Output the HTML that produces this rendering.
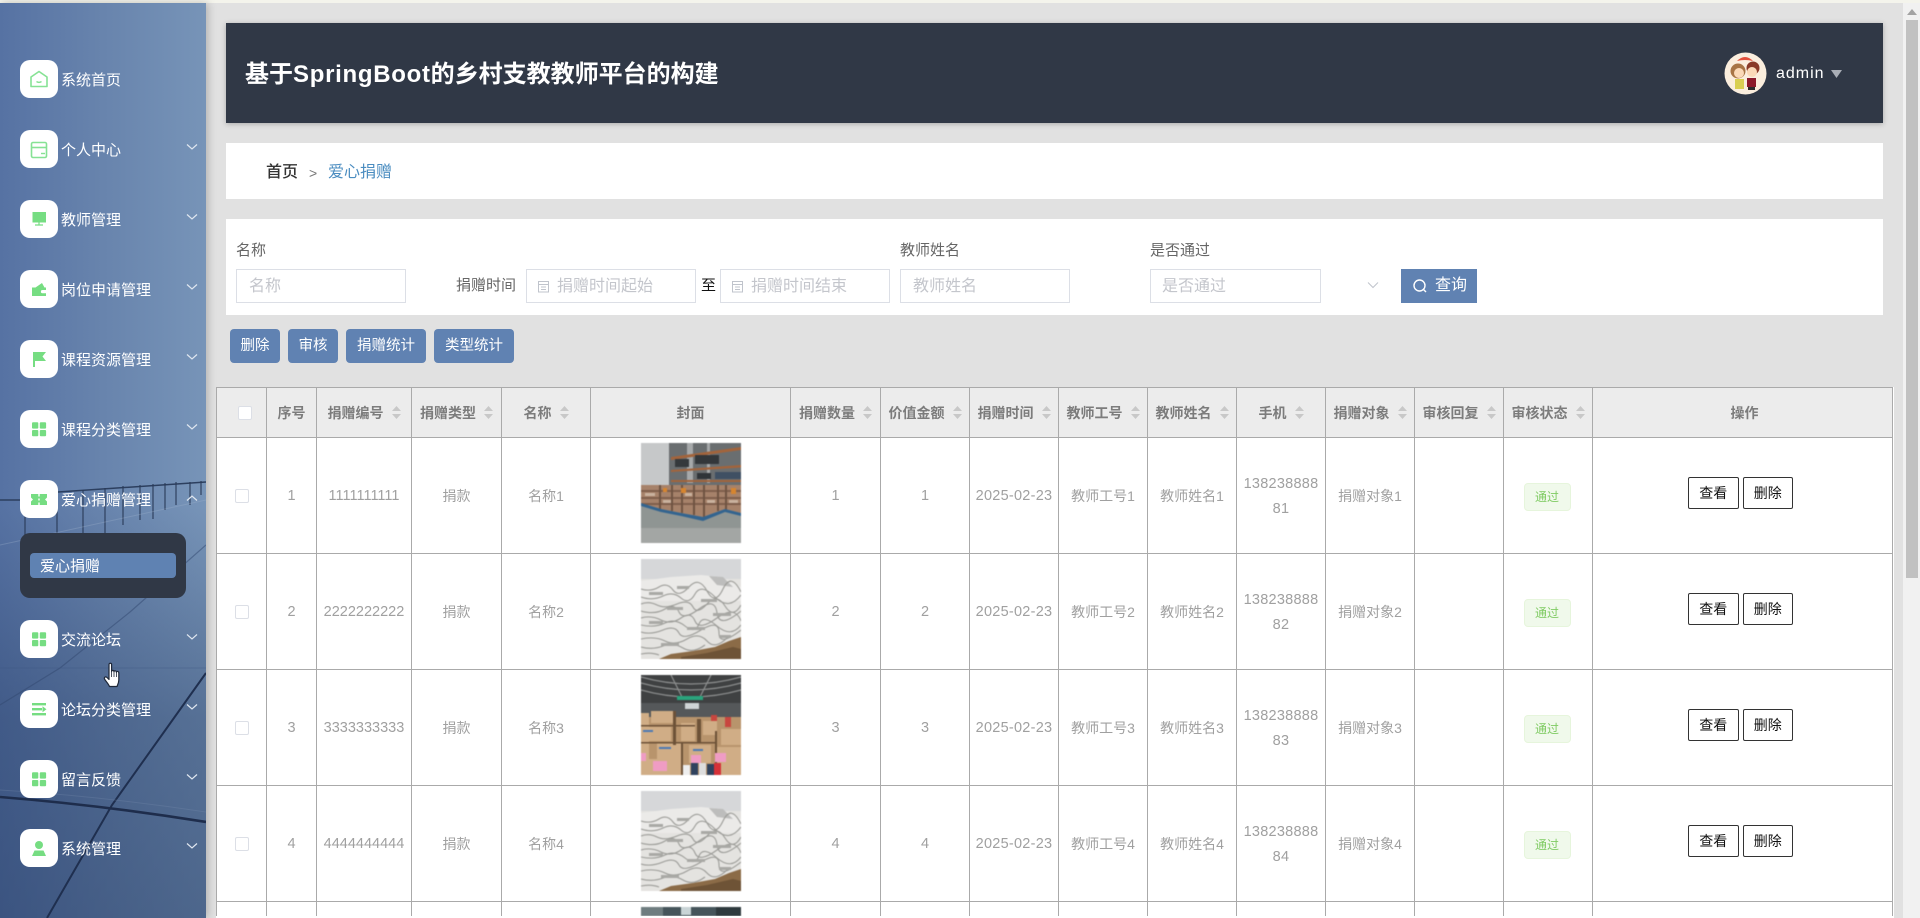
<!DOCTYPE html>
<html lang="zh-CN">
<head>
<meta charset="utf-8">
<title>爱心捐赠</title>
<style>
*{box-sizing:border-box}
html,body{margin:0;padding:0;width:1920px;height:918px;overflow:hidden;background:#e1e1e1;font-family:"Liberation Sans","Noto Sans CJK SC",sans-serif}
.abs,.abs-t{position:absolute}
#top{left:0;top:0;width:1920px;height:3px;background:#f4f4ec}
#side{left:0;top:3px;width:206px;height:915px;box-shadow:2px 0 8px rgba(0,0,0,.22);overflow:hidden}
.ib{position:absolute;left:20px;width:38px;height:38px;border-radius:10px;background:#fff}
.ib svg{display:block;width:38px;height:38px}
.mt{position:absolute;left:61px;color:#fff;font-size:15px;line-height:20px;white-space:nowrap;margin-top:2px}
.chev{position:absolute;left:186px;width:12px;height:8px}
#sub{left:20px;top:533px;width:166px;height:65px;border-radius:10px;background:#303846}
#subi{left:30px;top:553px;width:146px;height:25px;border-radius:4px;background:#5f82b2;color:#fff;font-size:15px;line-height:27px;padding-left:10px}
#head{left:226px;top:23px;width:1657px;height:100px;background:#303846;box-shadow:0 1px 5px rgba(0,0,0,.25)}
#title{left:245px;top:57px;color:#fff;font-size:24px;line-height:36px;font-weight:bold;white-space:nowrap}
#title span{letter-spacing:.7px}
#admin{left:1776px;top:62px;color:#fff;font-size:16px;line-height:24px;letter-spacing:1px}
#crumb{left:226px;top:143px;width:1657px;height:56px;background:#fff}
.cr{position:absolute;white-space:nowrap;line-height:24px;top:161px;font-size:16px}
#search{left:226px;top:219px;width:1657px;height:96px;background:#fff}
.lab{position:absolute;top:240px;font-size:15px;line-height:22px;color:#666;white-space:nowrap}
.inp{position:absolute;top:269px;width:170px;height:34px;border:1px solid #dcdfe6;background:#fff;font-size:16px;line-height:34px;color:#c4c6cc;white-space:nowrap}
.btn{position:absolute;top:329px;height:34px;background:#6082b2;border-radius:4px;color:#fff;font-size:14.5px;line-height:34px;text-align:center}
#q{left:1401px;top:269px;width:76px;height:34px;background:#6082b2;color:#fff;font-size:16px;line-height:34px;padding-left:34px}
#tw{left:216px;top:387px;width:1678px;height:531px;overflow:hidden;background:#fff}
table{border-collapse:collapse;table-layout:fixed;width:1677px;background:#fff}
th,td{border:1px solid #aaa;padding:0;text-align:center;vertical-align:middle;overflow:hidden}
th{height:50px;background:#ececec;color:#7c7c7c;font-size:14px;font-weight:bold;white-space:nowrap}
td{height:116px;color:#a0a0a0;font-size:14px;line-height:25px;padding-top:2px}
td.n{font-size:14.5px}
td.w{letter-spacing:.25px}
td.c{padding-top:0}
td.im{vertical-align:top;padding-top:5px}
td svg{display:block;margin:0 auto;width:100px;height:100px;filter:blur(.45px)}
th span.s{display:inline-flex;align-items:center;gap:8px}
th svg{display:block;width:9px;height:13px}
.cb{display:block;width:14px;height:14px;border:1px solid #dcdfe6;border-radius:2px;background:#fff;margin-left:18px}
th .cb{margin-left:21px}
.tag{display:inline-block;width:47px;height:28px;line-height:26px;background:#f0f9eb;border:1px solid #e6f5dc;border-radius:4px;color:#7fcb62;font-size:12px;position:relative;left:-1px}
td.op{padding:0 4px 6px 0}
.op b{display:inline-block;width:50.5px;height:32px;line-height:30px;border:1px solid #333;border-radius:2px;background:#fff;color:#111;font-size:14px;font-weight:normal;margin:0 2px}
th.opt{padding-left:4px}
tr.last td{height:14px;border-bottom:0;line-height:0}
tr.last td.im{padding-top:5px}
#sb{left:1903px;top:3px;width:17px;height:915px;background:#f1f1f1}
#thumb{left:1906px;top:20px;width:12px;height:558px;background:#c1c1c1}
</style>
</head>
<body>
<svg width="0" height="0" style="position:absolute">
<defs>
<symbol id="sort" viewBox="0 0 9 13"><path d="M4.5 0L9 5H0Z M0 8H9L4.5 13Z" fill="#c8c8c8"/></symbol>
<symbol id="w1" viewBox="0 0 100 100">
<rect width="100" height="100" fill="#8f9593"/>
<rect width="100" height="44" fill="#b5b7b8"/>
<rect x="0" y="0" width="30" height="44" fill="#c6c8c9"/>
<rect x="28" y="0" width="72" height="44" fill="#6a6e70"/>
<rect x="46" y="0" width="6" height="40" fill="#a6a9aa"/>
<rect x="66" y="0" width="3" height="40" fill="#a6a9aa"/>
<path d="M30 14 100 4V7L30 17Z M30 27 100 22V24.5L30 29Z M30 37H100V39H30Z" fill="#a2643c"/>
<rect x="34" y="16" width="14" height="8" fill="#35393c"/><rect x="54" y="12" width="24" height="9" fill="#33373a"/>
<rect x="56" y="30" width="14" height="6" fill="#2f3438"/><rect x="74" y="29" width="26" height="7" fill="#3f5063"/>
<path d="M0 42H100V70L84 66 62 74 40 70 20 66 0 60Z" fill="#a6826a"/>
<path d="M0 47H100V49H0Z M0 54H100V56H0Z M0 60H100V62H0Z" fill="#7f5f4c"/>
<path d="M18 42h2v26h-2z M30 42h2v26h-2z M40 42h2v28h-2z M52 42h2v30h-2z M62 42h2v32h-2z M76 42h2v26h-2z M84 42h2v26h-2z" fill="#6f5342"/>
<g fill="#c9b29e"><rect x="4" y="50" width="10" height="3"/><rect x="22" y="57" width="8" height="3"/><rect x="44" y="50" width="7" height="3"/><rect x="66" y="57" width="8" height="3"/><rect x="88" y="57" width="9" height="3"/></g>
<rect x="40" y="45" width="5" height="5" fill="#d6852f"/><rect x="90" y="45" width="5" height="6" fill="#d6852f"/><rect x="22" y="45" width="4" height="4" fill="#d6852f"/>
<path d="M0 60 20 66 40 70 62 74 84 66 100 70V73L84 69 62 78 40 73 20 69 0 63Z" fill="#33648f"/>
<rect y="85" width="100" height="15" fill="#a3a6a4"/>
</symbol>
<symbol id="w2" viewBox="0 0 100 100">
<rect width="100" height="100" fill="#e4e3e0"/>
<rect width="100" height="20" fill="#d6d7d9"/>
<path d="M0 22 30 18 60 16 80 18 100 28V42H0Z" fill="#ebeae8"/>
<path d="M68 17 82 18 92 28 76 26Z" fill="#bdbdbc"/>
<g fill="none" stroke="#9c9c98" stroke-width="1.1">
<path d="M0 30q10 3 18-2t14 3 16-3 18 4 16-2 18 3"/><path d="M0 38q12 4 22-1t18 2 14-4 20 3 26-2"/>
<path d="M0 45q8-3 16 1t20-1 16 3 14-3 18 2 16-1"/><path d="M0 52q14 4 24-2t14 3 20-3 18 4 24-2"/>
<path d="M0 59q10-3 20 2t20-2 14 3 22-3 24 3"/><path d="M0 66q14 3 24-2t20 3 14-2 18 2 24-1"/>
<path d="M0 73q10 3 22-2t16 3 22-3 18 3 22-3"/><path d="M0 80q14-3 24 2t22-2 20 2 20-3"/>
<path d="M0 88q12 3 22-1t20 2 22-3"/><path d="M0 95q10-2 18 1"/>
</g>
<g fill="#a9a9a5"><rect x="8" y="33" width="14" height="3"/><rect x="36" y="27" width="12" height="3"/><rect x="60" y="40" width="16" height="3"/><rect x="26" y="48" width="16" height="3"/><rect x="72" y="54" width="18" height="3"/><rect x="8" y="62" width="14" height="3"/><rect x="46" y="68" width="18" height="3"/><rect x="78" y="76" width="12" height="3"/><rect x="20" y="84" width="18" height="3"/></g>
<path d="M100 78V100H18L30 95 52 92 74 88 88 82Z" fill="#8b6b47"/>
<path d="M40 98 66 94 92 88 100 90V100H40Z" fill="#6e5336"/>
</symbol>
<symbol id="w3" viewBox="0 0 100 100">
<rect width="100" height="100" fill="#b8946c"/>
<rect width="100" height="30" fill="#3f4142"/>
<g fill="none" stroke="#8c8e8e" stroke-width="1.2"><path d="M0 8q50 14 100 0"/><path d="M0 15q50 14 100 0"/><path d="M0 2q50 14 100 0"/><path d="M30 0 42 24M70 0 58 24"/></g>
<rect x="36" y="21" width="26" height="4" fill="#2aa37c"/>
<rect x="0" y="28" width="100" height="14" fill="#55585a"/>
<rect x="44" y="28" width="14" height="6" fill="#cfd4d6"/>
<rect x="70" y="40" width="6" height="10" fill="#c8463f"/><rect x="84" y="42" width="6" height="10" fill="#c8463f"/>
<g fill="#d0ad86"><rect x="0" y="38" width="8" height="62"/><rect x="10" y="36" width="22" height="12"/><rect x="4" y="52" width="26" height="14"/><rect x="40" y="48" width="14" height="18"/><rect x="62" y="46" width="14" height="14"/><rect x="80" y="54" width="20" height="16"/><rect x="16" y="68" width="24" height="16"/><rect x="48" y="70" width="22" height="18"/><rect x="76" y="72" width="24" height="28"/><rect x="6" y="84" width="34" height="16"/></g>
<g fill="#6d5238"><rect x="32" y="36" width="3" height="34"/><rect x="56" y="44" width="4" height="24"/><rect x="0" y="50" width="54" height="1.5"/><rect x="0" y="67" width="76" height="1.5"/><rect x="40" y="68" width="2" height="32"/><rect x="74" y="56" width="2" height="44"/></g>
<g fill="#4c7ab4"><rect x="2" y="55" width="10" height="2"/><rect x="18" y="72" width="12" height="2"/><rect x="52" y="74" width="10" height="2"/></g>
<rect x="12" y="86" width="14" height="10" fill="#ef9cc4"/><rect x="50" y="80" width="10" height="8" fill="#ef9cc4"/><rect x="74" y="78" width="11" height="9" fill="#ef9cc4"/><rect x="0" y="78" width="5" height="8" fill="#ef9cc4"/>
<rect x="42" y="90" width="7" height="10" fill="#eee"/><rect x="50" y="88" width="7" height="12" fill="#30425e"/><rect x="58" y="88" width="7" height="12" fill="#ddd"/><rect x="66" y="89" width="7" height="11" fill="#30425e"/><rect x="73" y="88" width="7" height="12" fill="#d63138"/>
</symbol>
</defs>
</svg>

<div class="abs" id="top"></div>

<div class="abs" id="side">
<svg width="206" height="915" viewBox="0 3 206 915" style="display:block">
<defs>
<linearGradient id="sg" x1="0" x2="1" y1="0" y2="0"><stop offset="0" stop-color="#5672a3"/><stop offset=".5" stop-color="#6884ad"/><stop offset="1" stop-color="#7794b8"/></linearGradient>
<linearGradient id="dk" x1="0" x2="0" y1="0" y2="1"><stop offset="0" stop-color="#1a2f56" stop-opacity="0"/><stop offset=".55" stop-color="#1a2f56" stop-opacity="0"/><stop offset=".78" stop-color="#1a2f56" stop-opacity=".35"/><stop offset="1" stop-color="#1a2f56" stop-opacity=".45"/></linearGradient>
</defs>
<rect y="3" width="206" height="915" fill="url(#sg)"/>
<rect y="3" width="206" height="915" fill="url(#dk)"/>
<path d="M0 500 H20 M58 492 L206 482" stroke="#2c3f5f" stroke-width="1.5" fill="none"/>
<g stroke="#2a3b58" stroke-width="1.3" opacity=".85">
<path d="M25 498V535M57 492V535M83 490V533M105 488V533M123 486V525M140 485V520M153 484V519M165 483V510M176 482V505M190 482V505M201 481V495"/>
</g>
<path d="M0 545 L206 500" stroke="#a3b6cf" stroke-width="1" opacity=".3"/>
<path d="M0 705 L60 668 130 612 206 545" stroke="#32486f" stroke-width="1.2" opacity=".5" fill="none"/>
<path d="M0 668H206" stroke="#3b5480" stroke-width="1" opacity=".35"/>
<path d="M206 673 L112 805 L47 918" stroke="#1f2f4f" stroke-width="2" fill="none"/>
<path d="M0 797 Q100 805 206 822" stroke="#1e2d4c" stroke-width="2.6" fill="none"/>
<path d="M0 790 Q100 796 206 812" stroke="#7e95b4" stroke-width="1" fill="none" opacity=".25"/>
</svg>
</div>

<div class="ib" style="top:60px"><svg viewBox="0 0 38 38"><path d="M19 11.5L27 17V26.5H11V17Z" fill="none" stroke="#86e294" stroke-width="1.6" stroke-linejoin="round"/><path d="M16.5 21.5q2.5 1.8 5 0" fill="none" stroke="#86e294" stroke-width="1.4"/></svg></div>
<div class="mt" style="top:69px">系统首页</div>

<div class="ib" style="top:130px"><svg viewBox="0 0 38 38"><rect x="11.5" y="12.5" width="15" height="15" rx="1.5" fill="none" stroke="#86e294" stroke-width="1.6"/><path d="M11.5 17.5H26.5" stroke="#86e294" stroke-width="1.6"/><path d="M21 23.5H25" stroke="#86e294" stroke-width="1.4"/></svg></div>
<div class="mt" style="top:139px">个人中心</div>
<svg class="chev" style="top:143px" viewBox="0 0 12 8"><path d="M1 1.5L6 6L11 1.5" fill="none" stroke="#e0e7f0" stroke-width="1.2"/></svg>

<div class="ib" style="top:200px"><svg viewBox="0 0 38 38"><rect x="12.5" y="12" width="13.5" height="10.5" fill="#76dd82"/><path d="M19 22.5V24.5M15 25H23" stroke="#76dd82" stroke-width="1.2"/></svg></div>
<div class="mt" style="top:209px">教师管理</div>
<svg class="chev" style="top:213px" viewBox="0 0 12 8"><path d="M1 1.5L6 6L11 1.5" fill="none" stroke="#e0e7f0" stroke-width="1.2"/></svg>

<div class="ib" style="top:270px"><svg viewBox="0 0 38 38"><path d="M12 17.5H15.5L22 13L24.5 17.5H26V20H22.5A1.6 1.6 0 0 0 22.5 23.2H26V26H12Z" fill="#76dd82"/></svg></div>
<div class="mt" style="top:279px">岗位申请管理</div>
<svg class="chev" style="top:283px" viewBox="0 0 12 8"><path d="M1 1.5L6 6L11 1.5" fill="none" stroke="#e0e7f0" stroke-width="1.2"/></svg>

<div class="ib" style="top:340px"><svg viewBox="0 0 38 38"><path d="M13 12H15V27H13Z" fill="#76dd82"/><path d="M15 12H26L22.5 16.5L26 21H15Z" fill="#76dd82"/></svg></div>
<div class="mt" style="top:349px">课程资源管理</div>
<svg class="chev" style="top:353px" viewBox="0 0 12 8"><path d="M1 1.5L6 6L11 1.5" fill="none" stroke="#e0e7f0" stroke-width="1.2"/></svg>

<div class="ib" style="top:410px"><svg viewBox="0 0 38 38"><g fill="#76dd82"><rect x="12" y="12.3" width="6.3" height="6.3" rx="1"/><rect x="19.8" y="12.3" width="6.3" height="6.3" rx="1"/><rect x="12" y="20" width="6.3" height="6.3" rx="1"/><rect x="19.8" y="20" width="6.3" height="6.3" rx="1"/></g></svg></div>
<div class="mt" style="top:419px">课程分类管理</div>
<svg class="chev" style="top:423px" viewBox="0 0 12 8"><path d="M1 1.5L6 6L11 1.5" fill="none" stroke="#e0e7f0" stroke-width="1.2"/></svg>

<div class="ib" style="top:480px"><svg viewBox="0 0 38 38"><path d="M11 14H27V17.5L25 19.5L27 21.5V25H11V21.5L13 19.5L11 17.5Z" fill="#76dd82"/><path d="M19 14V16.5M19 18.5V20.5M19 22.5V25" stroke="#fff" stroke-width="1.4"/></svg></div>
<div class="mt" style="top:489px">爱心捐赠管理</div>
<svg class="chev" style="top:494px" viewBox="0 0 12 8"><path d="M1 6.5L6 2L11 6.5" fill="none" stroke="#e0e7f0" stroke-width="1.2"/></svg>

<div class="abs" id="sub"></div>
<div class="abs" id="subi">爱心捐赠</div>

<div class="ib" style="top:620px"><svg viewBox="0 0 38 38"><g fill="#76dd82"><rect x="12" y="12.3" width="6.3" height="6.3" rx="1"/><rect x="19.8" y="12.3" width="6.3" height="6.3" rx="1"/><rect x="12" y="20" width="6.3" height="6.3" rx="1"/><rect x="19.8" y="20" width="6.3" height="6.3" rx="1"/></g></svg></div>
<div class="mt" style="top:629px">交流论坛</div>
<svg class="chev" style="top:633px" viewBox="0 0 12 8"><path d="M1 1.5L6 6L11 1.5" fill="none" stroke="#e0e7f0" stroke-width="1.2"/></svg>

<div class="ib" style="top:690px"><svg viewBox="0 0 38 38"><g fill="#76dd82"><rect x="12" y="13" width="14" height="2.4"/><rect x="12" y="18" width="10" height="2.4"/><path d="M22.5 16.2L26.5 19.2L22.5 22.2Z"/><rect x="12" y="23" width="14" height="2.4"/></g></svg></div>
<div class="mt" style="top:699px">论坛分类管理</div>
<svg class="chev" style="top:703px" viewBox="0 0 12 8"><path d="M1 1.5L6 6L11 1.5" fill="none" stroke="#e0e7f0" stroke-width="1.2"/></svg>

<div class="ib" style="top:760px"><svg viewBox="0 0 38 38"><g fill="#76dd82"><rect x="12" y="12.3" width="6.3" height="6.3" rx="1"/><rect x="19.8" y="12.3" width="6.3" height="6.3" rx="1"/><rect x="12" y="20" width="6.3" height="6.3" rx="1"/><rect x="19.8" y="20" width="6.3" height="6.3" rx="1"/></g></svg></div>
<div class="mt" style="top:769px">留言反馈</div>
<svg class="chev" style="top:773px" viewBox="0 0 12 8"><path d="M1 1.5L6 6L11 1.5" fill="none" stroke="#e0e7f0" stroke-width="1.2"/></svg>

<div class="ib" style="top:829px"><svg viewBox="0 0 38 38"><circle cx="19" cy="16" r="4" fill="#76dd82"/><path d="M12 27L14.5 21.5H23.5L26 27Z" fill="#76dd82"/></svg></div>
<div class="mt" style="top:838px">系统管理</div>
<svg class="chev" style="top:842px" viewBox="0 0 12 8"><path d="M1 1.5L6 6L11 1.5" fill="none" stroke="#e0e7f0" stroke-width="1.2"/></svg>

<svg class="abs" style="left:103px;top:662px" width="19" height="26" viewBox="0 0 19 26"><path d="M6 2.5C6 .8 8.6 .8 8.6 2.5V9.5C8.6 8 11 8 11 9.7 11 8.4 13.4 8.4 13.4 10.2 13.4 9 15.8 9.2 15.8 11V18C15.8 21 14.5 23 14 24.5H6.5C5.5 22 3.5 20 1.8 17.5.5 15.5 2.5 14 4 15.5L6 17.5Z" fill="#fff" stroke="#1f2838" stroke-width="1.2" stroke-linejoin="round"/><path d="M8.6 10V15M11 10V15M13.4 10.5V15" stroke="#1f2838" stroke-width=".8"/></svg>

<div class="abs" id="head"></div>
<div class="abs" id="title">基于<span>SpringBoot</span>的乡村支教教师平台的构建</div>
<svg class="abs" style="left:1724px;top:52px" width="43" height="43" viewBox="0 0 43 43">
<circle cx="21.5" cy="21.5" r="21" fill="#fbeede"/>
<path d="M13 9Q21 1 29 9Q21 7 13 9Z" fill="#e4503c"/>
<circle cx="14" cy="19" r="7.5" fill="#a87445"/><circle cx="29" cy="16" r="6.5" fill="#8a3a28"/>
<circle cx="15" cy="21" r="5" fill="#fbd9b8"/><circle cx="28" cy="20" r="5" fill="#fbd9b8"/>
<rect x="11" y="27" width="9" height="10" fill="#d9cf52"/><rect x="23" y="26" width="9" height="9" fill="#8c1a2a"/><rect x="24" y="35" width="7" height="3" fill="#2c2c2c"/>
</svg>
<div class="abs" id="admin">admin</div>
<svg class="abs" style="left:1831px;top:70px" width="11" height="8" viewBox="0 0 11 8"><path d="M0 0H11L5.5 8Z" fill="#a9aeb6"/></svg>

<div class="abs" id="crumb"></div>
<div class="cr" style="left:266px;color:#333;font-weight:500">首页</div>
<div class="cr" style="left:309px;color:#777;font-size:14px">&gt;</div>
<div class="cr" style="left:328px;color:#4a8cc0">爱心捐赠</div>

<div class="abs" id="search"></div>
<div class="lab" style="left:236px">名称</div>
<div class="inp" style="left:236px;padding-left:12px">名称</div>
<div class="lab" style="left:456px;top:275px;color:#666">捐赠时间</div>
<div class="inp" style="left:526px;padding-left:30px">捐赠时间起始</div>
<svg class="abs" style="left:537px;top:280px" width="13" height="13" viewBox="0 0 13 13"><path d="M1.5 1.5H11.5V12H1.5ZM1.5 4.5H11.5M4 7H9M4 9.5H9" fill="none" stroke="#c0c4cc" stroke-width="1"/></svg>
<div class="lab" style="left:701px;top:275px;color:#111">至</div>
<div class="inp" style="left:720px;padding-left:30px">捐赠时间结束</div>
<svg class="abs" style="left:731px;top:280px" width="13" height="13" viewBox="0 0 13 13"><path d="M1.5 1.5H11.5V12H1.5ZM1.5 4.5H11.5M4 7H9M4 9.5H9" fill="none" stroke="#c0c4cc" stroke-width="1"/></svg>
<div class="lab" style="left:900px">教师姓名</div>
<div class="inp" style="left:900px;padding-left:12px">教师姓名</div>
<div class="lab" style="left:1150px">是否通过</div>
<div class="inp" style="left:1150px;width:171px;padding-left:11px">是否通过</div>
<svg class="abs" style="left:1366px;top:281px" width="14" height="8" viewBox="0 0 14 8"><path d="M2 1.5L7 6.5L12 1.5" fill="none" stroke="#c0c4cc" stroke-width="1"/></svg>
<div class="abs" id="q">查询</div>
<svg class="abs" style="left:1412px;top:278px" width="16" height="16" viewBox="0 0 16 16"><circle cx="7.5" cy="7.5" r="5.5" fill="none" stroke="#fff" stroke-width="1.4"/><path d="M11.5 11.5L14 14" stroke="#fff" stroke-width="1.4"/></svg>

<div class="btn" style="left:230px;width:50px">删除</div>
<div class="btn" style="left:288px;width:50px">审核</div>
<div class="btn" style="left:346px;width:80px">捐赠统计</div>
<div class="btn" style="left:434px;width:80px">类型统计</div>

<div class="abs" id="tw">
<table>
<colgroup><col style="width:50px"><col style="width:50px"><col style="width:95px"><col style="width:90px"><col style="width:89px"><col style="width:200px"><col style="width:90px"><col style="width:89px"><col style="width:89px"><col style="width:89px"><col style="width:89px"><col style="width:89px"><col style="width:89px"><col style="width:89px"><col style="width:89px"><col style="width:300px"></colgroup>
<tr>
<th><span class="cb"></span></th><th>序号</th>
<th><span class="s">捐赠编号<svg><use href="#sort"/></svg></span></th>
<th><span class="s">捐赠类型<svg><use href="#sort"/></svg></span></th>
<th><span class="s">名称<svg><use href="#sort"/></svg></span></th>
<th>封面</th>
<th><span class="s">捐赠数量<svg><use href="#sort"/></svg></span></th>
<th><span class="s">价值金额<svg><use href="#sort"/></svg></span></th>
<th><span class="s">捐赠时间<svg><use href="#sort"/></svg></span></th>
<th><span class="s">教师工号<svg><use href="#sort"/></svg></span></th>
<th><span class="s">教师姓名<svg><use href="#sort"/></svg></span></th>
<th><span class="s">手机<svg><use href="#sort"/></svg></span></th>
<th><span class="s">捐赠对象<svg><use href="#sort"/></svg></span></th>
<th><span class="s">审核回复<svg><use href="#sort"/></svg></span></th>
<th><span class="s">审核状态<svg><use href="#sort"/></svg></span></th>
<th class="opt">操作</th>
</tr>
<tr><td class="c"><span class="cb"></span></td><td class="n">1</td><td class="n">1111111111</td><td>捐款</td><td>名称1</td><td class="im"><svg><use href="#w1"/></svg></td><td class="n">1</td><td class="n">1</td><td class="n w">2025-02-23</td><td>教师工号1</td><td>教师姓名1</td><td class="n w">138238888<br>81</td><td>捐赠对象1</td><td></td><td><span class="tag">通过</span></td><td class="op"><b>查看</b><b>删除</b></td></tr>
<tr><td class="c"><span class="cb"></span></td><td class="n">2</td><td class="n">2222222222</td><td>捐款</td><td>名称2</td><td class="im"><svg><use href="#w2"/></svg></td><td class="n">2</td><td class="n">2</td><td class="n w">2025-02-23</td><td>教师工号2</td><td>教师姓名2</td><td class="n w">138238888<br>82</td><td>捐赠对象2</td><td></td><td><span class="tag">通过</span></td><td class="op"><b>查看</b><b>删除</b></td></tr>
<tr><td class="c"><span class="cb"></span></td><td class="n">3</td><td class="n">3333333333</td><td>捐款</td><td>名称3</td><td class="im"><svg><use href="#w3"/></svg></td><td class="n">3</td><td class="n">3</td><td class="n w">2025-02-23</td><td>教师工号3</td><td>教师姓名3</td><td class="n w">138238888<br>83</td><td>捐赠对象3</td><td></td><td><span class="tag">通过</span></td><td class="op"><b>查看</b><b>删除</b></td></tr>
<tr><td class="c"><span class="cb"></span></td><td class="n">4</td><td class="n">4444444444</td><td>捐款</td><td>名称4</td><td class="im"><svg><use href="#w2"/></svg></td><td class="n">4</td><td class="n">4</td><td class="n w">2025-02-23</td><td>教师工号4</td><td>教师姓名4</td><td class="n w">138238888<br>84</td><td>捐赠对象4</td><td></td><td><span class="tag">通过</span></td><td class="op"><b>查看</b><b>删除</b></td></tr>
<tr class="last"><td class="c"></td><td></td><td></td><td></td><td></td><td class="im"><svg viewBox="0 0 100 9" style="height:9px"><rect width="100" height="9" fill="#46555b"/><rect x="0" y="0" width="22" height="9" fill="#6f7d80"/><rect x="75" y="0" width="25" height="9" fill="#2f3a3e"/><rect x="40" y="0" width="10" height="8" fill="#c9d4d6"/></svg></td><td></td><td></td><td></td><td></td><td></td><td></td><td></td><td></td><td></td><td></td></tr>
</table>
</div>

<div class="abs" id="sb"></div>
<div class="abs" id="thumb"></div>
<svg class="abs" style="left:1907px;top:9px" width="10" height="6" viewBox="0 0 10 6"><path d="M5 0L10 6H0Z" fill="#a3a3a3"/></svg>
</body>
</html>
